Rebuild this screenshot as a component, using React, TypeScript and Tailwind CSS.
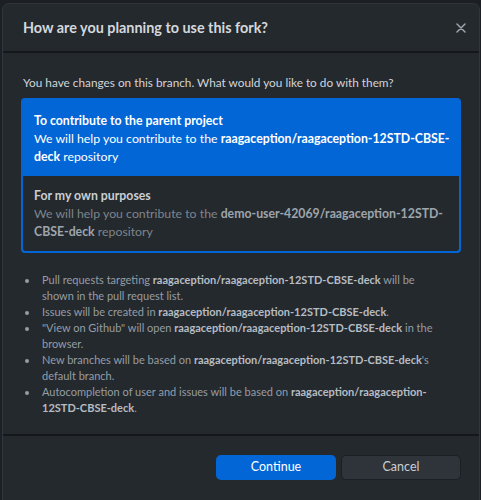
const repo = "raagaception/raagaception-12STD-CBSE-deck";

function Close() {
  return (
    <svg width="10" height="10" viewBox="0 0 10 10" className="text-[#9ea4ab]">
      <path d="M1 1l8 8M9 1l-8 8" stroke="currentColor" strokeWidth="1.5" strokeLinecap="round" />
    </svg>
  );
}

export default function App() {
  const notes = [
    <>Pull requests targeting <b>{repo}</b> will be shown in the pull request list.</>,
    <>Issues will be created in <b>{repo}</b>.</>,
    <>"View on Github" will open <b>{repo}</b> in the browser.</>,
    <>New branches will be based on <b>{repo}</b>'s default branch.</>,
    <>Autocompletion of user and issues will be based on <b>raagaception/raagaception-12STD-CBSE-deck</b>.</>,
  ];

  return (
    <div className="h-[500px] w-[481px] overflow-hidden bg-[#1c1f23] pl-[2px] pt-[3px] font-['Lato',sans-serif]">
      <div className="flex h-[520px] w-[478px] flex-col rounded-t-[7px] border border-[#30363d] bg-[#24292e]">
        <div className="flex h-[49px] shrink-0 items-center justify-between border-b-2 border-[#15181b] pl-[20px] pr-[13px]">
          <h1 className="text-[14.4px] font-bold text-[#d4d8dc]">How are you planning to use this fork?</h1>
          <Close />
        </div>

        <div className="px-[18px] pt-[21px]">
          <p className="pl-[2px] text-[11.8px] leading-[18px] text-[#d1d5da]">
            You have changes on this branch. What would you like to do with them?
          </p>

          <div className="mt-[6px] overflow-hidden rounded-[4px] border-2 border-[#0366d6] bg-[#0366d6]">
            <div className="pl-[11px] pr-[8px] pb-[10px] pt-[12px] text-[12.3px] leading-[18px] text-white">
              <div className="font-bold">To contribute to the parent project</div>
              <div>
                We will help you contribute to the <b>{repo}</b> repository
              </div>
            </div>
            <div className="rounded-b-[2px] bg-[#24292e] pl-[11px] pr-[8px] pb-[10px] pt-[11px] text-[12.3px] leading-[18px]">
              <div className="font-bold text-[#c9ced3]">For my own purposes</div>
              <div className="text-[#7d858d]">
                We will help you contribute to the <b className="text-[#9ea5ac]">demo-user-42069/raagaception-12STD-CBSE-deck</b> repository
              </div>
            </div>
          </div>

          <ul className="mt-[19px] list-disc pl-[18px] pr-[15px] text-[11px] leading-[16px] text-[#959da5] marker:text-[#959da5]">
            {notes.map((n, i) => (
              <li key={i} className="pl-[3px] [&_b]:font-bold [&_b]:text-[#b6bcc2]">
                {n}
              </li>
            ))}
          </ul>
        </div>

        <div className="mt-auto flex h-[88px] shrink-0 flex-col border-t-2 border-[#15181b]">
          <div className="mt-[19px] flex justify-end gap-[5px] pr-[18px]">
            <button className="h-[25px] w-[120px] rounded-[5px] bg-[#0366d6] text-[12.5px] text-white">Continue</button>
            <button className="h-[25px] w-[120px] rounded-[5px] border border-[#1b1f23] bg-[#2f343b] text-[12.5px] text-[#c9ced3]">
              Cancel
            </button>
          </div>
        </div>
      </div>
    </div>
  );
}
